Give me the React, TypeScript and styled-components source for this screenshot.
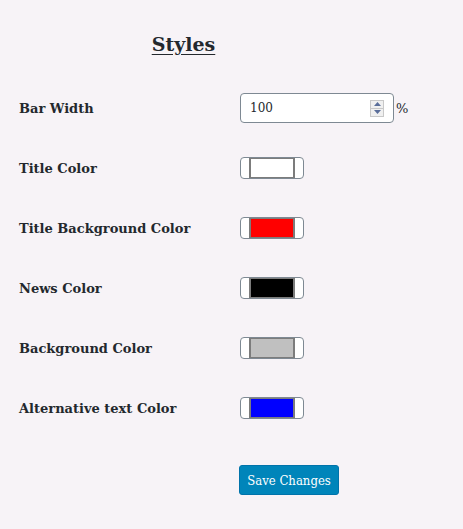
import React from "react";
import styled, { createGlobalStyle } from "styled-components";

const GlobalStyle = createGlobalStyle`
  html, body {
    margin: 0;
    padding: 0;
    background: #f7f3f7;
  }
  body {
    font-family: "DejaVu Serif", "Liberation Serif", serif;
    color: #23282d;
  }
`;

const fields = [
  { label: "Title Color", color: "#ffffff" },
  { label: "Title Background Color", color: "#ff0000" },
  { label: "News Color", color: "#000000" },
  { label: "Background Color", color: "#c0c0c0" },
  { label: "Alternative text Color", color: "#0000ff" }
];

function App() {
  return (
    <>
      <GlobalStyle />
      <Page>
        <Title>Styles</Title>
        <Form>
          <Label>Bar Width</Label>
          <Field>
            <NumberBox>
              <NumberValue>100</NumberValue>
              <Spinner>
                <SpinHalf>
                  <svg width="7" height="4" viewBox="0 0 7 4">
                    <path d="M0 4 L3.5 0 L7 4 Z" fill="#5a6e9a" />
                  </svg>
                </SpinHalf>
                <SpinHalf>
                  <svg width="7" height="4" viewBox="0 0 7 4">
                    <path d="M0 0 L3.5 4 L7 0 Z" fill="#5a6e9a" />
                  </svg>
                </SpinHalf>
              </Spinner>
            </NumberBox>
            <Unit>%</Unit>
          </Field>
          {fields.map(f => (
            <React.Fragment key={f.label}>
              <Label>{f.label}</Label>
              <Field>
                <ColorButton>
                  <Swatch $color={f.color} />
                </ColorButton>
              </Field>
            </React.Fragment>
          ))}
        </Form>
        <Actions>
          <SaveButton>Save Changes</SaveButton>
        </Actions>
      </Page>
    </>
  );
}

const Page = styled.div`
  width: 463px;
  height: 529px;
  padding-top: 30px;
  box-sizing: border-box;
`;

const Title = styled.h2`
  margin: 0;
  width: 367px;
  text-align: center;
  font-size: 19px;
  font-weight: bold;
  text-decoration: underline;
  text-underline-offset: 3px;
  line-height: 28px;
`;

const Form = styled.div`
  display: grid;
  grid-template-columns: 221px auto;
  grid-auto-rows: 60px;
  padding-left: 19px;
  margin-top: 35px;
`;

const Label = styled.div`
  display: flex;
  align-items: center;
  font-size: 13px;
  font-weight: bold;
  height: 30px;
`;

const Field = styled.div`
  display: flex;
  align-items: center;
  height: 30px;
`;

const NumberBox = styled.div`
  display: flex;
  align-items: center;
  justify-content: space-between;
  box-sizing: border-box;
  width: 154px;
  height: 30px;
  background: #fff;
  border: 1px solid #7e8993;
  border-radius: 4px;
  padding: 0 9px 0 9px;
`;

const NumberValue = styled.span`
  font-size: 12px;
  font-variant-numeric: oldstyle-nums;
`;

const Spinner = styled.div`
  display: flex;
  flex-direction: column;
  border: 1px solid #c8c8c8;
  background: #f0f0f0;
`;

const SpinHalf = styled.div`
  display: flex;
  align-items: center;
  justify-content: center;
  width: 12px;
  height: 7px;
  & + & {
    border-top: 1px solid #c8c8c8;
  }
`;

const Unit = styled.span`
  font-size: 13px;
  margin-left: 2px;
`;

const ColorButton = styled.div`
  display: flex;
  box-sizing: border-box;
  width: 64px;
  height: 22px;
  background: #fff;
  border: 1px solid #7e8993;
  border-radius: 4px;
  padding: 0 8px;
`;

const Swatch = styled.div<{ $color: string }>`
  flex: 1;
  background: ${p => p.$color};
  border: 2px solid #7c7c7c;
  border-top-width: 1px;
  border-bottom-width: 1px;
`;

const Actions = styled.div`
  padding-left: 239px;
  margin-top: 12px;
`;

const SaveButton = styled.button`
  width: 100px;
  height: 30px;
  background: #0085ba;
  color: #fff;
  border: 1px solid #0073aa;
  border-radius: 3px;
  font-family: "DejaVu Serif Condensed", "Liberation Serif", serif;
  font-size: 13px;
  padding: 0;
  cursor: pointer;
`;

export default App;
